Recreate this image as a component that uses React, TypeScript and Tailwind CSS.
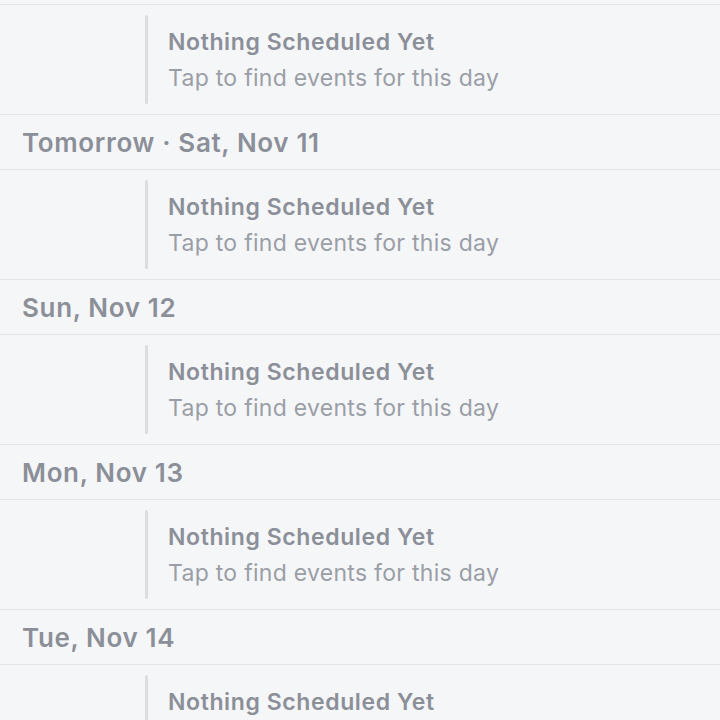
const days = ['Tomorrow · Sat, Nov 11', 'Sun, Nov 12', 'Mon, Nov 13', 'Tue, Nov 14'];

function EmptyDay() {
  return (
    <div className="flex h-[110px] items-stretch border-b border-[#e3e4e8]">
      <div className="w-[145px] shrink-0" />
      <div className="my-[10px] w-[2.5px] shrink-0 rounded-full bg-[#dcdde1]" />
      <div className="flex flex-col justify-center pl-[20.5px]">
        <span className="text-[23px] font-semibold leading-[36px] tracking-[0.6px] text-[#8b8f98]">
          Nothing Scheduled Yet
        </span>
        <span className="text-[23px] leading-[36px] tracking-[0.28px] text-[#9a9ea6]">
          Tap to find events for this day
        </span>
      </div>
    </div>
  );
}

function DayHeader({ label }: { label: string }) {
  return (
    <div className="flex h-[55px] items-center border-b border-[#e3e4e8] px-[22px]">
      <span className="text-[26px] font-semibold tracking-[0.65px] text-[#8b8f98]">{label}</span>
    </div>
  );
}

export default function App() {
  return (
    <div
      className="h-[720px] w-[720px] overflow-hidden bg-[#f5f6f8]"
      style={{ fontFamily: 'Inter, "Noto Sans", sans-serif' }}
    >
      <div className="h-[5px] border-b border-[#e3e4e8]" />
      <EmptyDay />
      {days.map((d) => (
        <div key={d}>
          <DayHeader label={d} />
          <EmptyDay />
        </div>
      ))}
    </div>
  );
}
